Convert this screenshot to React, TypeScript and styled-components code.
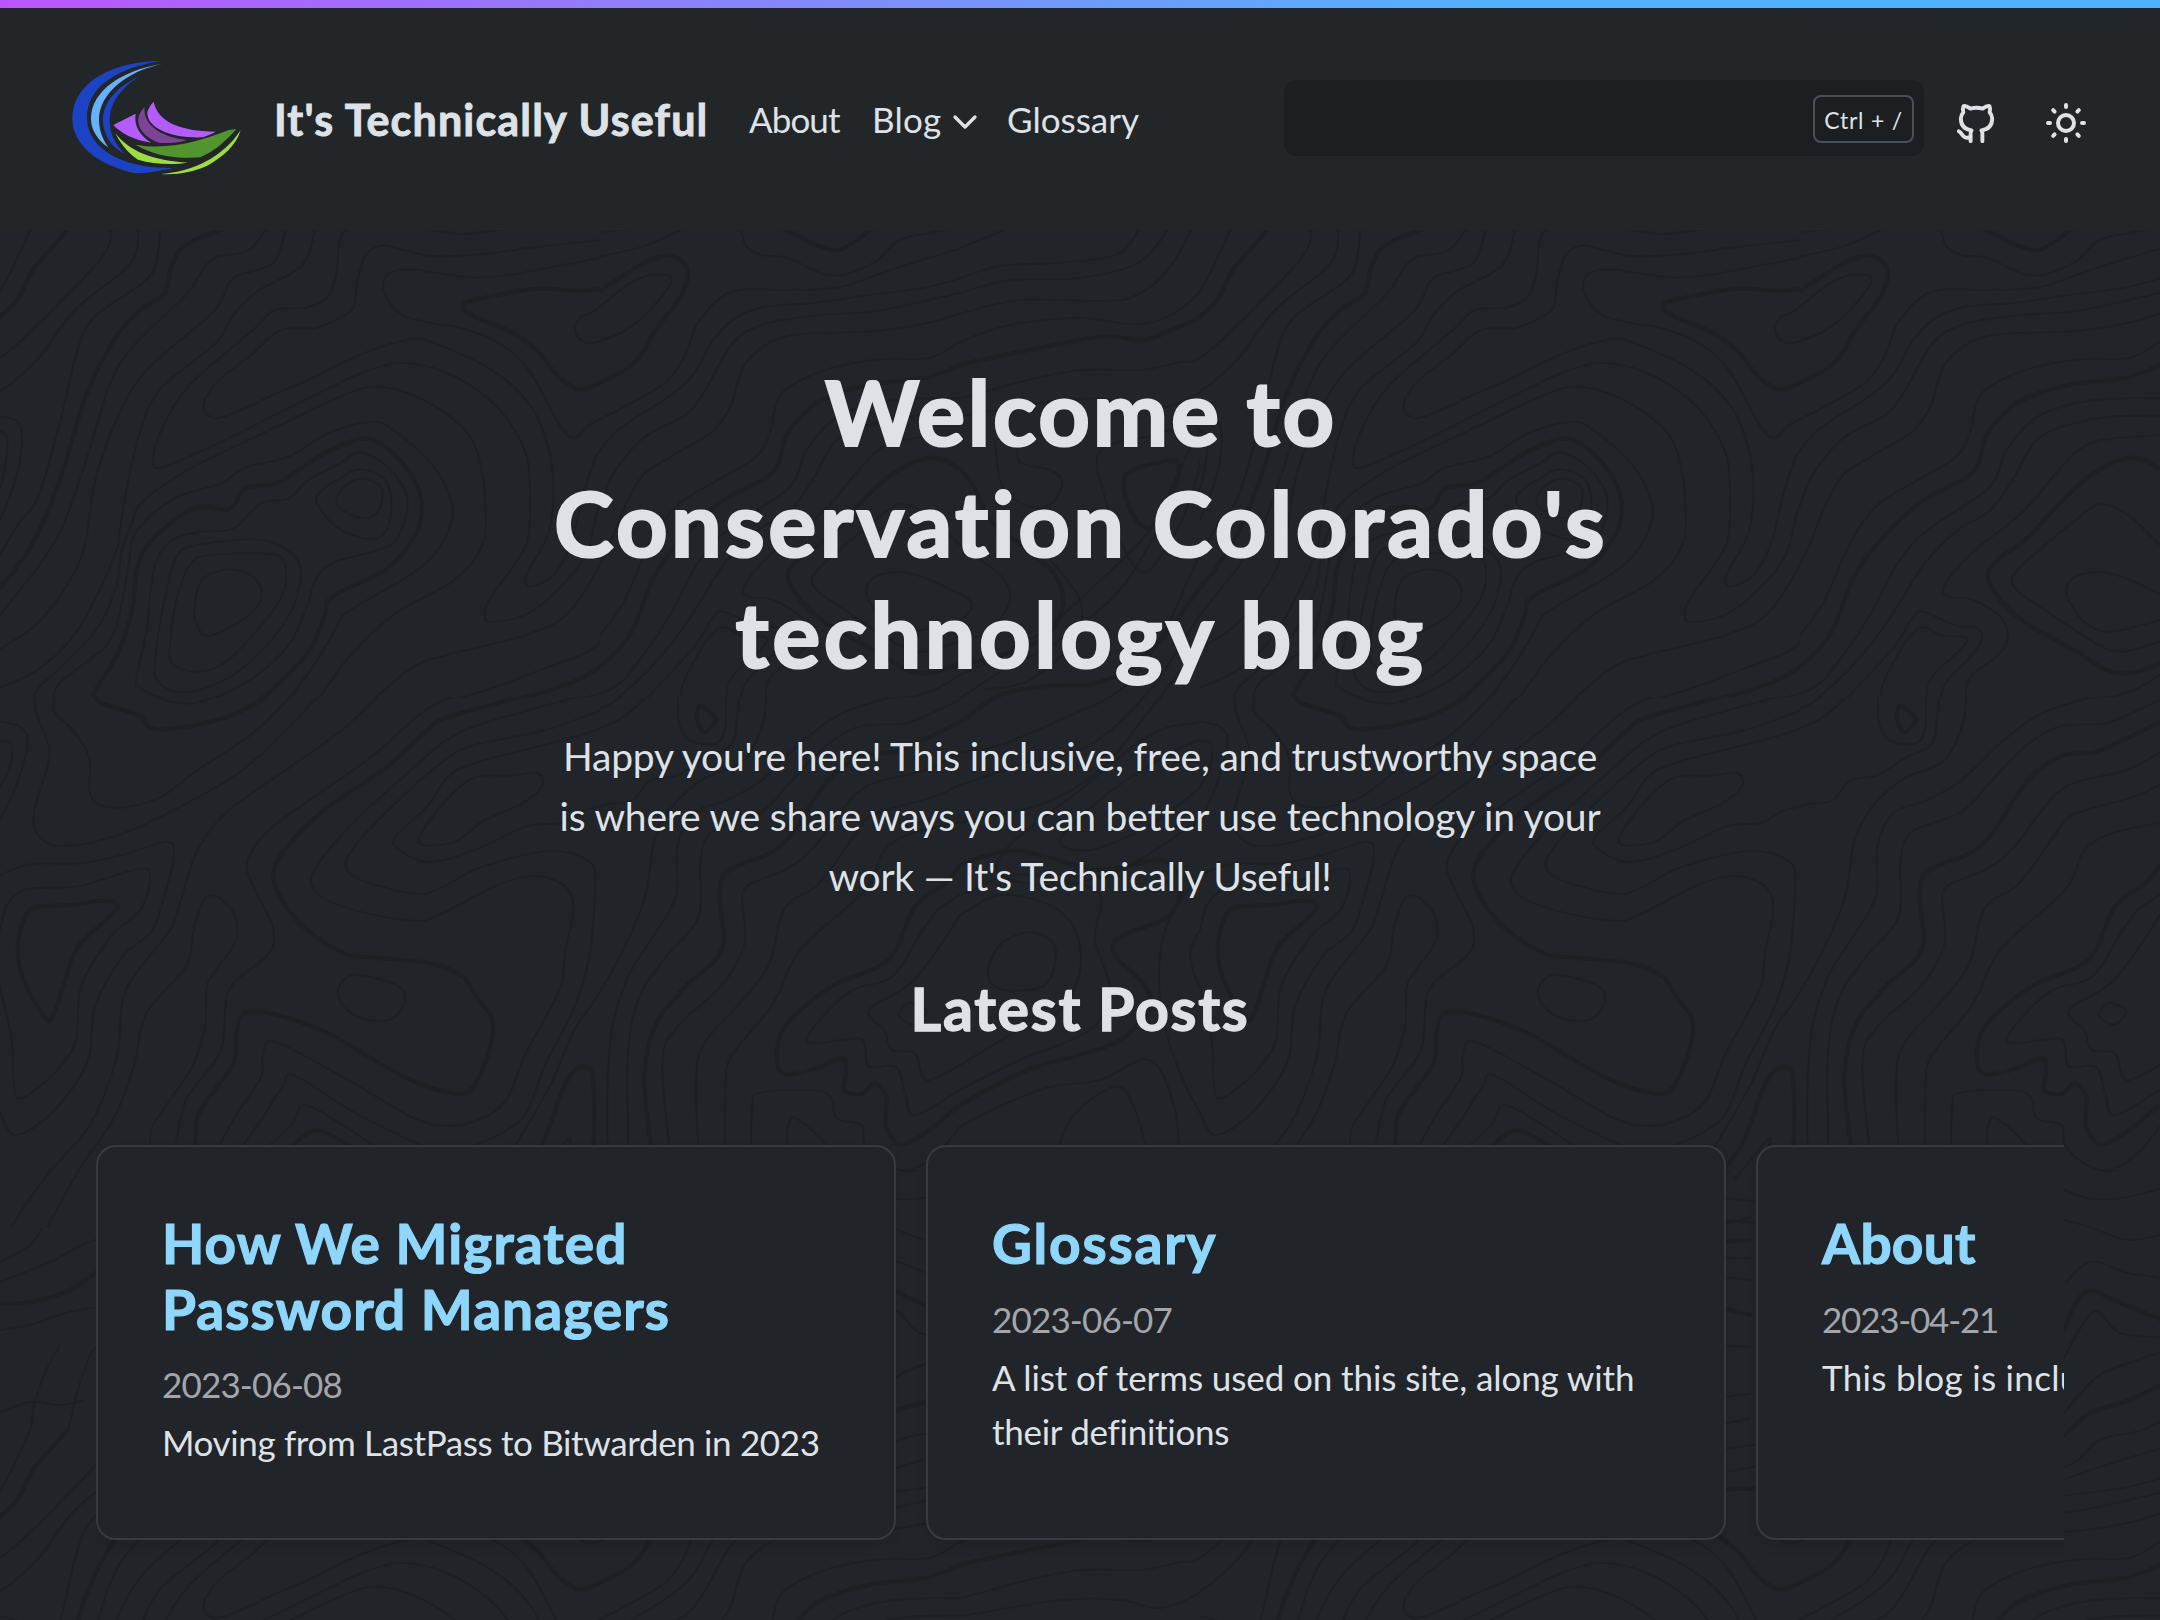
import React from "react";
import styled, { createGlobalStyle } from "styled-components";

const ink = "#dee2e6";
const page = "#212429";

const GlobalStyle = createGlobalStyle`
  *, *::before, *::after { box-sizing: border-box; }
  html, body { margin: 0; padding: 0; background: ${page}; }
  body { font-family: Lato, "Open Sans", sans-serif; color: ${ink}; overflow: hidden; }
  h1, h2, h3, p { margin: 0; }
`;

/* ---------- topographic backdrop ---------- */

type Sheet = {
  clip: [number, number, number, number];
  transform: string;
  thin: string[];
  thick: string[];
};

/* Contours are point lists; a trailing "z" closes the loop. */
const sheets: Sheet[] = [
  {
    clip: [0, 228, 600, 469.5],
    transform: "translate(0 225) scale(0.3954 0.33333)",
    thin: [
      "78,10 40,110 0,200 -30,250",
      "282,10 265,85 170,210 60,340 0,400 -40,430",
      "350,10 330,115 190,255 90,410 0,500 -40,520",
      "405,10 398,95 370,165 240,275 195,380 150,600 95,820 50,890 0,990 -20,1030",
      "673,10 630,75 540,100 505,150 470,210 340,360 280,470 225,680 160,900 100,1020 60,1080 0,1170 -30,1210",
      "723,10 690,115 590,160 540,260 375,430 300,570 240,770 215,960 170,1080 90,1200 0,1272 -30,1290",
      "797,10 765,120 650,200 590,270 545,355 400,500 345,660 310,860 290,990 200,1210 100,1330 0,1388 -30,1400",
      "876,10 858,50 850,150 825,220 775,248 695,255 640,315 480,480 410,610 388,700 410,727 560,650 830,490 960,425 1050,417 1160,460 1260,550 1325,670 1340,780 1335,940 1300,1020 1240,1120 1225,1165 1245,1192 1350,1155 1472,1010 1511,860 1549,750 1627,640",
      "1568,40 1400,60 1300,75 1190,90 1090,93 1030,78 965,62 925,90 905,160 898,230 880,265 800,308 710,315 640,385 550,470 515,540 540,579 600,560 700,505 780,465 910,390 1040,343 1110,360 1250,440 1340,540 1385,660 1400,800 1385,930 1335,1040 1330,1075 1350,1082 1400,1050 1443,960 1477,800 1510,690 1569,610",
      "1568,88 1400,125 1290,150 1190,158 1110,145 1030,133 980,150 972,200 1010,265 1080,292 1170,310 1270,360 1340,440 1400,570 1435,630 1460,635 1490,600 1588,540",
      "1568,203 1500,260 1465,280 1455,320 1475,350 1510,352 1568,335",
      "1075,10 1170,27 1290,10",
      "85,1450 90,1400 150,1330 240,1220 290,1100 310,970 335,890 360,830 460,745 550,690 700,605 880,505 970,487 1080,530 1180,620 1215,720 1228,850 1220,960 1150,1065 1000,1165 880,1300 790,1450",
      "133,1450 150,1375 270,1260 305,1150 325,1020 345,920 440,820 560,775 620,728 730,695 830,625 940,590 1000,620 1100,730 1145,850 1120,950 1050,1040 880,1160 850,1210 800,1310 720,1440",
      "345,1360 370,1220 390,1030 430,950 500,922 590,910 660,835 730,820 780,765 860,715 910,683 980,725 1028,810 1020,900 980,965 850,1010 800,1060 775,1150 730,1260 650,1350 560,1410 480,1436 400,1415 350,1385 z",
      "800,830 820,790 860,760 910,733 970,760 990,830 975,920 930,942 850,905 z",
      "850,830 880,775 925,762 965,790 960,850 930,880 880,865 z",
      "392,1310 415,1130 445,1000 490,962 640,943 720,970 760,1030 740,1150 660,1280 560,1370 460,1402 400,1370 z",
      "430,1260 445,1130 480,1020 530,990 690,988 722,1030 710,1120 640,1230 560,1320 490,1340 435,1315 z",
      "495,1120 515,1060 580,1033 640,1055 662,1110 630,1170 530,1233 495,1190 z",
      "-30,570 0,575 45,590 55,650 40,760 0,885 -20,920",
      "-20,610 0,617 18,640 15,710 0,790 -20,830",
      "920,1450 1040,1330 1130,1290 1330,1230 1440,1160 1530,990 1578,850",
      "1060,1450 1230,1395 1400,1320 1500,1270 1568,1180",
      "1400,1450 1568,1385",
    ],
    thick: [
      "175,10 80,140 50,215 0,275 -30,300",
      "565,10 470,60 435,120 415,205 340,270 275,370 215,520 150,770 80,960 0,1090 -30,1130",
      "1568,160 1520,190 1460,197 1350,192 1200,225 1170,247 1200,275 1300,325 1360,380 1410,450 1460,493 1510,478 1568,445",
      "240,1440 240,1400 300,1280 335,1150 345,1040 380,950 490,850 580,852 620,790 700,775 760,730 830,680 920,640 990,680 1050,770 1067,850 1050,930 980,1030 840,1115 822,1170 780,1280 700,1380 630,1450",
      "1200,1450 1380,1400 1500,1340 1578,1250",
    ],
  },
  {
    clip: [0, 697, 600, 531],
    transform: "translate(0 690) scale(0.3954 0.33333)",
    thin: [
      "340,-15 380,15 460,40 520,30 610,-15",
      "93,-10 90,60 125,180 110,270 85,370 100,440 160,468 300,435 480,335 640,215 820,0 840,-30",
      "150,-20 135,60 180,115 225,200 230,320 290,353 400,325 500,240 650,120 765,-20",
      "990,-20 870,115 760,210 580,360 500,480 460,620 430,720 350,840 310,930 295,1100 230,1300 130,1440 50,1570 0,1680",
      "1240,-20 1090,50 940,200 820,300 680,420 625,520 650,610 690,710 680,790 590,880 570,950 565,1050 540,1120 470,1230 445,1365",
      "1590,-20 1250,90 1130,150 1040,240 900,390 800,530 795,600 880,655 1040,692 1110,675 1250,590 1350,557 1430,590 1450,660 1430,780 1415,900 1330,1090 1280,1230 1210,1290 1120,1307 1040,1280 880,1170 700,1057 665,1090 660,1160 600,1270 550,1375",
      "1590,30 1380,120 1200,165 1120,215 1000,340 890,480 880,545 950,585 1060,612 1120,590 1220,530 1390,483 1490,515 1505,590 1490,800 1450,960 1380,1120 1330,1270 1260,1335 1180,1375",
      "1070,1370 900,1270 745,1157 715,1190 660,1290 610,1375",
      "1590,88 1440,145 1200,220 1130,265 1080,350 1000,440 1010,480 1085,516 1200,480 1330,410 1420,398 1480,360 1580,335",
      "1200,262 1290,257 1360,250 1370,290 1320,340 1220,395 1150,455 1070,465 1065,430 1130,330 z",
      "855,900 880,860 920,857 1010,890 1022,940 990,987 920,987 870,950 z",
      "-30,570 0,555 80,522 200,520 310,495 420,455 440,490 420,600 385,720 310,800 240,950 220,1120 130,1270 40,1335 0,1270 -20,1220",
      "-10,760 0,720 20,640 70,597 200,588 350,537 380,560 355,660 280,740 205,890 190,1060 120,1170 50,1225 35,1180 30,1050 0,895 -10,850",
      "-30,94 0,95 50,110 70,160 40,290 0,388 -20,420",
      "-30,148 0,150 30,165 25,230 0,290 -20,320",
      "950,1370 780,1247 740,1300 675,1375",
      "1568,790 1510,920 1452,1020 1394,1180 1300,1375",
      "1568,930 1540,1100 1535,1380",
      "380,1375 385,1310 430,1230 490,1120 520,1000 525,880 590,770 600,700 580,650 540,615 510,640 490,720 470,830 370,970 340,1120 290,1280 200,1440 120,1610",
      "1350,1470 1400,1400 1440,1345 1435,1400 1425,1470",
      "1300,1520 1440,1540",
      "1300,1590 1440,1600",
    ],
    thick: [
      "240,-15 250,35 350,75 380,112 430,117 550,90 640,45 710,-15",
      "1430,-15 1150,75 1080,120 980,230 820,360 720,480 692,570 750,690 860,785 950,803 1090,820 1170,860 1210,930 1245,990 1235,1090 1190,1200 1130,1207 1040,1170 930,1100 830,1030 700,975 620,970 600,1020 590,1120 530,1220 500,1280 493,1375",
      "45,780 60,690 90,652 180,645 260,632 295,655 200,765 170,850 140,960 117,988 60,870 z",
      "735,1375 800,1320 895,1375",
      "1290,1480 1370,1365 1430,1180 1475,1130 1500,1170 1502,1375",
    ],
  },
  {
    clip: [0, 1228, 110, 200],
    transform: "translate(0 0)",
    thin: [
      "46,1222 30,1245 0,1262",
      "110,1236 84,1244 50,1262 0,1282",
      "110,1306 70,1312 30,1325 0,1330",
      "110,1340 92,1352 78,1390 68,1432",
      "84,1400 60,1405 30,1402 0,1412",
      "60,1345 44,1375 34,1405 31,1432",
    ],
    thick: ["110,1262 70,1290 30,1302 0,1304"],
  },
  {
    clip: [600, 228, 360, 469.5],
    transform: "translate(360 225) scale(0.38265 0.33333)",
    thin: [
      "600,860 620,860 660,750 740,640 850,570 900,500 970,360 1050,300 1200,270 1330,262 1450,235 1568,203 1620,195",
      "585,800 620,690 680,610 800,520 870,450 920,350 980,280 1060,245 1180,235 1330,210 1470,190 1568,160 1620,140",
      "440,50 490,40 560,28 720,10",
      "540,630 565,640 600,600 700,540 800,470 850,390 880,300 930,230 990,195 1120,194 1250,187 1400,130 1568,70 1620,50",
      "565,310 580,275 610,260 720,165 800,150 810,180 740,275 670,330 590,353 z",
      "560,110 600,100 740,65 845,10",
      "995,10 1010,65 1050,90 1120,100 1230,152 1340,115 1410,45 1490,25 1540,10",
      "560,1140 640,990 690,850 740,750 820,690 920,620 970,540 1000,430 1060,360 1150,328 1350,318 1480,295 1568,267 1620,250",
      "600,1260 680,1150 760,950 830,840 920,775 1030,700 1070,630 1090,530 1130,480 1230,430 1360,403 1490,398 1568,350 1610,325",
      "500,1450 660,1390 740,1290 810,1170 880,1020 960,915 1120,790 1165,680 1230,590 1310,545 1430,522 1568,520 1600,515",
      "640,1450 750,1340 850,1200 950,1020 1040,915 1120,860 1180,770 1250,640 1370,588 1470,573 1600,573",
      "725,1450 870,1270 920,1180 950,1160 1030,1200 1090,1210 1103,1240 1070,1300 1010,1370 988,1450",
      "830,1450 850,1360 910,1240 950,1207 1000,1232 1060,1237 1050,1270 970,1360 955,1450",
      "1600,625 1568,630 1420,645 1340,690 1210,860 1090,970 1010,1070 1010,1113 1080,1125 1150,1175 1170,1240 1140,1295 1070,1360 1058,1450",
      "1600,990 1568,960 1490,875 1420,837 1370,865 1200,1030 1190,1090 1260,1150 1400,1255 1470,1280 1568,1250",
      "1600,1125 1568,1108 1480,1060 1410,1040 1340,1060 1325,1110 1370,1190 1440,1220 1568,1185",
      "1300,1445 1440,1415 1500,1395 1568,1350 1600,1330",
      "1500,1460 1568,1418 1600,1400",
    ],
    thick: [
      "265,247 290,225 450,193 610,198 650,180 740,115 810,92 855,130 840,210 770,320 720,410 650,460 565,493 500,430 450,360 z",
      "1105,10 1200,62 1260,72 1340,10",
      "500,1380 630,1320 710,1220 770,1050 850,930 950,825 1060,760 1095,710 1120,620 1200,530 1330,480 1480,458 1568,420 1600,400",
      "1600,770 1568,735 1500,698 1400,740 1310,830 1220,940 1130,1020 1125,1080 1200,1180 1350,1280 1430,1335 1500,1343 1600,1300",
    ],
  },
  {
    clip: [600, 697, 360, 475],
    transform: "translate(360 690) scale(0.38265 0.33333)",
    thin: [
      "1060,-10 1055,90 1005,210 900,265 820,345 770,450 740,640 650,860 560,1020 500,1180 410,1365",
      "1530,-20 1480,5 1380,25 1260,70 1160,150 1050,270 960,330 870,370 830,470 825,620 760,750 700,860 660,1010 647,1180 647,1440",
      "1600,10 1568,30 1430,98 1310,108 1220,165 1130,270 1050,365 920,425 890,510 885,680 800,800 730,920 700,1100 703,1440",
      "1600,180 1568,188 1480,240 1330,285 1260,360 1180,480 1110,540 1010,590 1000,650 1005,760 950,880 830,1010 790,1120 815,1440",
      "1600,275 1568,285 1500,320 1340,375 1290,440 1200,580 1110,655 1070,820 1000,930 900,1060 878,1180 888,1440",
      "1600,390 1568,397 1430,435 1365,490 1320,600 1150,780 1080,940 970,1100 955,1200 955,1440",
      "1600,590 1568,615 1510,660 1460,740 1390,860 1280,905 1180,1020 1180,1060 1300,1045 1320,1070 1330,1130 1400,1130 1425,1210 1450,1275 1568,1200 1600,1180",
      "1590,640 1568,675 1520,760 1440,880 1330,960 1370,1020 1390,1080 1450,1090 1480,1170 1568,1125 1600,1105",
      "1410,980 1430,940 1480,960 1450,1003 z",
      "1022,1440 1025,1250 1050,1207 1215,1207 1245,1285 1310,1305 1320,1365 1370,1420 1430,1440 1500,1400 1568,1310 1600,1270",
      "1115,1440 1120,1300 1160,1300 1280,1440",
      "833,-10 832,90 860,150 930,160 955,110 955,-10",
      "995,-10 985,90 970,165 900,205 830,255 760,270 710,332 640,345 540,398 450,402",
      "785,-20 690,80 600,125 500,155",
      "735,-20 640,50 560,80",
      "700,-20 600,20 500,50",
    ],
    thick: [
      "1600,80 1568,95 1500,135 1400,185 1310,198 1220,275 1130,430 1070,490 965,540 940,610 945,780 850,890 770,1010 743,1180 770,1440",
      "1600,490 1568,525 1530,580 1450,650 1380,810 1230,890 1110,1010 1090,1110 1110,1153 1180,1140 1260,1105 1270,1150 1265,1200 1310,1212 1345,1180 1375,1220 1375,1310 1410,1363 1470,1335 1568,1245 1600,1215",
      "885,50 905,58 930,90 900,125 882,95 z",
    ],
  },
  {
    clip: [960, 228, 240, 944],
    transform: "translate(0 0)",
    thin: [
      "940,254 960,248 1014,226",
      "930,287 960,278 1000,266 1070,262 1120,253 1141,226",
      "930,302 960,293 1010,280 1080,278 1140,262 1170,226",
      "930,326 960,314 1020,300 1100,301 1135,296 1168,270 1193,226",
      "930,355 960,342 1010,325 1080,318 1130,324 1165,318 1200,292 1230,250",
      "930,398 960,398 1020,382 1080,370 1140,370 1180,362 1200,358 1240,320",
      "930,416 960,416 1060,400 1120,400 1160,408 1200,392 1230,365",
      "1097,466 1110,445 1150,436 1190,425 1203,440 1190,500 1165,550 1142,572 1120,540 z",
      "1018,440 1020,462 1050,470 1062,481 1055,500 1040,508 1015,500 1000,480 995,440",
      "925,510 960,545 1000,575 1010,600 990,630 960,642 925,652",
      "925,580 960,594 972,605 960,620 925,632",
      "925,690 960,675 1030,640 1090,590 1150,530 1175,480 1200,431 1220,420",
      "920,722 960,698 1000,672 1060,640 1120,590 1165,520 1200,488 1220,460",
      "920,762 960,753 1000,745 1060,720 1120,690 1160,640 1200,555 1220,530",
      "920,798 960,785 1020,765 1090,745 1150,690 1200,615 1230,580",
      "920,835 960,822 1040,805 1100,770 1150,710 1200,649 1240,625",
      "1230,720 1200,722 1150,735 1080,790 1010,845 1000,875 1060,885 1130,865 1200,819 1220,800",
      "1230,740 1200,740 1150,765 1100,800 1060,840 1090,850 1150,825 1200,787 1220,760",
      "920,910 960,895 1010,875 1060,880 1100,895 1095,940 1110,990 1090,1030 1020,1060 960,1090 930,1110",
      "930,930 960,915 1000,895 1050,905 1075,930 1080,970 1060,1010 1010,1035 960,1065 930,1080",
      "1029,932 1050,940 1056,955 1045,985 1005,990 988,975 1000,945 z",
      "930,1160 960,1127 1040,1090 1100,1080 1150,1060 1175,1110 1180,1180",
      "1050,1180 1070,1120 1115,1087 1135,1110 1155,1180",
      "1225,860 1200,875 1165,930 1160,1000 1175,1060 1200,1113 1220,1140",
      "1215,910 1200,930 1190,955 1200,988 1215,1010",
      "1050,560 1080,600 1075,640 1030,680 985,690",
    ],
    thick: [
      "930,378 960,365 1020,352 1080,340 1110,336 1145,340 1175,328 1200,317 1230,285",
      "930,452 945,458 960,470 973,485 990,520 1018,543 1055,575 1062,610 1040,640 980,661 960,663 920,668",
      "1125,476 1166,461 1179,466 1172,495 1151,527 1133,515 z",
      "920,745 960,722 1000,695 1047,686 1092,684 1129,669 1165,635 1200,588 1230,550",
      "930,890 960,865 1010,851 1048,857 1100,870 1160,860 1180,880 1170,915 1120,937 1115,955 1144,985 1150,1010 1120,1040 1080,1055 1030,1069 960,1105 930,1130",
    ],
  },
  {
    clip: [860, 1170, 100, 258],
    transform: "translate(-300 1120) scale(0.8036 0.33333)",
    thin: [
      "1420,60 1455,80 1480,140 1510,152 1540,120 1590,40",
      "1440,200 1480,235 1530,230 1590,190",
      "1440,295 1480,320 1530,360 1590,330",
      "1450,490 1470,440 1490,425 1530,460 1590,480",
      "1445,730 1470,620 1490,575 1520,640 1590,655",
      "1445,890 1490,770 1540,720 1590,680",
      "1445,1050 1500,950 1540,935 1590,880",
      "1440,1095 1490,1040 1590,975",
      "1440,1130 1490,1080 1530,1085 1590,1050",
      "1440,1185 1500,1155 1590,1110",
      "1440,1225 1500,1200 1590,1175",
    ],
    thick: [
      "1445,650 1465,540 1485,512 1510,540 1590,620",
      "1445,960 1480,880 1530,840 1590,770",
    ],
  },
  {
    clip: [515, 1170, 50, 258],
    transform: "translate(-1200 1120) scale(0.8036 0.33333)",
    thin: [
      "2136,200 2180,60",
      "2136,320 2180,290",
      "2136,412 2180,415",
      "2136,470 2180,480",
      "2136,678 2180,680",
      "2136,835 2180,820",
      "2136,915 2180,895",
      "2136,975 2180,950",
      "2136,1060 2180,1035",
      "2136,1165 2180,1150",
    ],
    thick: ["2136,365 2180,360", "2136,560 2180,585", "2136,1110 2180,1105"],
  },
];

function contour(points: string): string {
  const closed = points.endsWith("z");
  const p = points
    .replace(/\s*z$/, "")
    .split(" ")
    .map((pair) => pair.split(",").map(Number));
  const n = p.length;
  const at = (i: number) =>
    closed ? p[(i + n) % n] : p[Math.max(0, Math.min(n - 1, i))];
  let d = `M${p[0][0]} ${p[0][1]}`;
  const last = closed ? n : n - 1;
  for (let i = 0; i < last; i++) {
    const [a, b, c, e] = [at(i - 1), at(i), at(i + 1), at(i + 2)];
    d += `C${b[0] + (c[0] - a[0]) / 6} ${b[1] + (c[1] - a[1]) / 6} ${
      c[0] - (e[0] - b[0]) / 6
    } ${c[1] - (e[1] - b[1]) / 6} ${c[0]} ${c[1]}`;
  }
  return closed ? d + "Z" : d;
}

const Terrain = styled.svg`
  position: absolute;
  inset: 0;
  z-index: -1;
  fill: none;
  stroke: #1c2022;
  path {
    vector-effect: non-scaling-stroke;
  }
`;

function Topography() {
  return (
    <Terrain width="2160" height="1390" viewBox="0 230 2160 1390" aria-hidden>
      <defs>
        {sheets.map(({ clip: [x, y, width, height] }, i) => (
          <clipPath id={`sheet${i}`} key={i}>
            <rect x={x} y={y} width={width} height={height} />
          </clipPath>
        ))}
        <g id="tile">
          {sheets.map((sheet, i) => (
            <g key={i} clipPath={`url(#sheet${i})`}>
              <g transform={sheet.transform}>
                {sheet.thin.map((line) => (
                  <path key={line} d={contour(line)} strokeWidth="2" />
                ))}
                {sheet.thick.map((line) => (
                  <path key={line} d={contour(line)} strokeWidth="4.2" />
                ))}
              </g>
            </g>
          ))}
        </g>
      </defs>
      <use href="#tile" />
      <use href="#tile" x="1200" />
      <use href="#tile" y="1200" />
      <use href="#tile" x="1200" y="1200" />
    </Terrain>
  );
}

/* ---------- header ---------- */

const AccentBar = styled.div`
  height: 8px;
  background: linear-gradient(90deg, #bb55fb 0%, #7f8df9 40%, #55b0fc 68%, #4fb2ff 100%);
`;

const Header = styled.header`
  display: flex;
  align-items: center;
  height: 222px;
  padding: 0 70px 2px 72px;
  background: #222628;
`;

const Logo = styled.svg`
  flex: none;
  width: 170px;
  height: 115px;
  margin-bottom: 2px;
`;

const Brand = styled.a`
  flex: 0 0 475px;
  margin: 3px 0 0 32px;
  font-size: 43px;
  font-weight: 700;
  line-height: 60px;
  letter-spacing: 1.18px;
  white-space: nowrap;
  -webkit-text-stroke: 0.9px ${ink};
`;

const Nav = styled.nav`
  display: flex;
  margin-top: 1px;
  font-size: 35px;
  line-height: 60px;
`;

const NavItem = styled.a<{ $width: number; $track?: number }>`
  display: flex;
  align-items: center;
  width: ${(p) => p.$width}px;
  letter-spacing: ${(p) => p.$track ?? 0}px;
  svg {
    margin: 7px 0 0 4px;
  }
`;

const Search = styled.div`
  display: flex;
  align-items: center;
  justify-content: flex-end;
  width: 640px;
  height: 76px;
  margin-left: auto;
  padding: 2px 10px 0 0;
  border-radius: 12px;
  background: #1c1f22;
`;

const Shortcut = styled.kbd`
  width: 101px;
  height: 48px;
  border: 2px solid #495057;
  border-radius: 8px;
  font: 400 23px/46px Lato, sans-serif;
  letter-spacing: 0.76px;
  text-align: center;
`;

const IconButton = styled.button<{ $gap: number }>`
  display: flex;
  margin: 10px 0 0 ${(p) => p.$gap}px;
  padding: 0;
  border: 0;
  background: none;
  color: ${ink};
`;

const Stroke = styled.svg`
  flex: none;
  fill: none;
  stroke: currentColor;
  stroke-width: 2;
  stroke-linecap: round;
  stroke-linejoin: round;
`;

const LogoMark = () => (
  <Logo viewBox="67 59 510 345" aria-label="It's Technically Useful">
    <path fill="#1c43c4" d="M337 61C180 63 68 130 68 235c0 75 72 138 190 164 42-1 82-9 112-16C210 385 112 320 112 232 112 140 200 82 337 61Z" />
    <path fill="#68b0fb" d="M337 71C220 89 124 150 124 235c0 35 21 65 52 86-21-31-28-56-28-86C150 160 230 93 337 71Z" />
    <path fill="#1c43c4" d="M270 108c-70 32-110 77-110 132 0 45 25 80 66 102-31-32-46-62-46-102 0-50 30-95 90-132Z" />
    <path fill="#b45cf9" d="M191 254l67-34c-6 35 12 65 47 87-50-7-90-27-114-53Z" />
    <path fill="#7d4495" d="M285 200c-7 50 45 90 127 99-22 8-52 10-82 9-65-23-82-73-45-108Z" />
    <path fill="#b45cf9" d="M312 184c13 61 78 88 187 90-14 8-29 13-39 17-90 4-170-26-167-76 4-12 10-22 19-31Z" />
    <path fill="#52942e" d="M257 313c93 17 193-8 278-43l25-4c-30 34-60 64-108 85-72 6-142-6-195-38Z" />
    <path fill="#9ddc43" d="M197 278c43 57 113 82 218 89-45 7-105 5-150-9-35-23-55-53-68-80Z" />
    <path fill="#9ddc43" d="M573 270c-53 80-143 125-240 131 47 4 97-6 137-23 50-28 90-63 103-108Z" />
  </Logo>
);

/* ---------- hero ---------- */

const Hero = styled.main`
  position: relative;
  z-index: 0;
  height: 1390px;
  padding-top: 126px;
  overflow: hidden;
`;

const Line = styled.span<{ $track: number }>`
  display: block;
  letter-spacing: ${(p) => p.$track}px;
  white-space: nowrap;
`;

const Title = styled.h1`
  font-size: 90px;
  font-weight: 700;
  line-height: 111px;
  text-align: center;
  text-indent: 2px;
  -webkit-text-stroke: 2.2px ${ink};
`;

const Lead = styled.p`
  margin-top: 37px;
  font-size: 39px;
  line-height: 60px;
  text-align: center;
`;

const SectionTitle = styled.h2`
  margin-top: 67px;
  font-size: 59px;
  font-weight: 700;
  line-height: 72px;
  letter-spacing: 1.7px;
  text-align: center;
  -webkit-text-stroke: 1.3px ${ink};
`;

/* ---------- posts ---------- */

const Rail = styled.section`
  display: flex;
  gap: 30px;
  width: 1968px;
  margin: 100px 0 0 96px;
  overflow-x: clip;
  overflow-y: visible;
`;

const Card = styled.article`
  flex: 0 0 800px;
  height: 395px;
  padding: 64px 61px 0 64px;
  border: 2px solid #373a3e;
  border-radius: 20px;
  background: #212429;
  box-shadow: 0 6px 12px rgba(0, 0, 0, 0.09);
`;

const CardTitle = styled.h3`
  margin-bottom: 15px;
  color: #8ed6fb;
  font-size: 55px;
  font-weight: 700;
  line-height: 65.5px;
  -webkit-text-stroke: 1.2px #8ed6fb;
`;

const PostDate = styled.time<{ $track: number }>`
  display: block;
  margin-bottom: 4px;
  color: #a3a6aa;
  font-size: 35px;
  line-height: 54px;
  letter-spacing: ${(p) => p.$track}px;
`;

const Summary = styled.p`
  font-size: 35px;
  line-height: 54px;
`;

type Tracked = [text: string, track: number];

const posts: { title: Tracked[]; date: Tracked; summary: Tracked[] }[] = [
  {
    title: [["How We Migrated", 1.1], ["Password Managers", 1.08]],
    date: ["2023-06-08", -0.84],
    summary: [["Moving from LastPass to Bitwarden in 2023", -0.36]],
  },
  {
    title: [["Glossary", 1.8]],
    date: ["2023-06-07", -0.84],
    summary: [["A list of terms used on this site, along with", -0.1], ["their definitions", -0.28]],
  },
  {
    title: [["About", 0.26]],
    date: ["2023-04-21", -1.23],
    summary: [["This blog is inclusive", 0.3]],
  },
];

const lines = (rows: Tracked[]) =>
  rows.map(([text, track]) => (
    <Line key={text} $track={track}>
      {text}
    </Line>
  ));

export default function App() {
  return (
    <>
      <GlobalStyle />
      <AccentBar />
      <Header>
        <LogoMark />
        <Brand>It's Technically Useful</Brand>
        <Nav>
          <NavItem $width={123} $track={-0.9}>About</NavItem>
          <NavItem $width={135} $track={0.24}>
            Blog
            <Stroke width="40" height="40" viewBox="0 0 24 24">
              <path d="M6 9l6 6 6-6" />
            </Stroke>
          </NavItem>
          <NavItem $width={135}>Glossary</NavItem>
        </Nav>
        <Search>
          <Shortcut>Ctrl + /</Shortcut>
        </Search>
        <IconButton $gap={29} aria-label="GitHub">
          <Stroke width="47" height="47" viewBox="0 0 24 24">
            <path d="M9 19c-4.3 1.4-4.3-2.5-6-3m12 5v-3.5c0-1 .1-1.4-.5-2 2.8-.3 5.5-1.4 5.5-6a4.6 4.6 0 0 0-1.3-3.2 4.2 4.2 0 0 0-.1-3.2s-1.1-.3-3.5 1.3a12.3 12.3 0 0 0-6.2 0C6.5 2.8 5.4 3.1 5.4 3.1a4.2 4.2 0 0 0-.1 3.2A4.6 4.6 0 0 0 4 9.5c0 4.6 2.7 5.7 5.5 6-.6.6-.6 1.2-.5 2V21" />
          </Stroke>
        </IconButton>
        <IconButton $gap={42} aria-label="Toggle theme">
          <Stroke width="48" height="48" viewBox="0 0 24 24">
            <circle cx="12" cy="12" r="4" />
            <path d="M3 12h1m8-9v1m8 8h1m-9 8v1M5.6 5.6l.7.7m12.1-.7l-.7.7m0 11.4l.7.7m-12.1-.7l-.7.7" />
          </Stroke>
        </IconButton>
      </Header>
      <Hero>
        <Topography />
        <Title>
          {lines([["Welcome to", 2.8], ["Conservation Colorado's", 3.42], ["technology blog", 3.5]])}
        </Title>
        <Lead>
          {lines([
            ["Happy you're here! This inclusive, free, and trustworthy space", -0.2],
            ["is where we share ways you can better use technology in your", -0.19],
            ["work — It's Technically Useful!", -0.26],
          ])}
        </Lead>
        <SectionTitle>Latest Posts</SectionTitle>
        <Rail>
          {posts.map((post) => (
            <Card key={post.date[0]}>
              <CardTitle>{lines(post.title)}</CardTitle>
              <PostDate $track={post.date[1]}>{post.date[0]}</PostDate>
              <Summary>{lines(post.summary)}</Summary>
            </Card>
          ))}
        </Rail>
      </Hero>
    </>
  );
}
